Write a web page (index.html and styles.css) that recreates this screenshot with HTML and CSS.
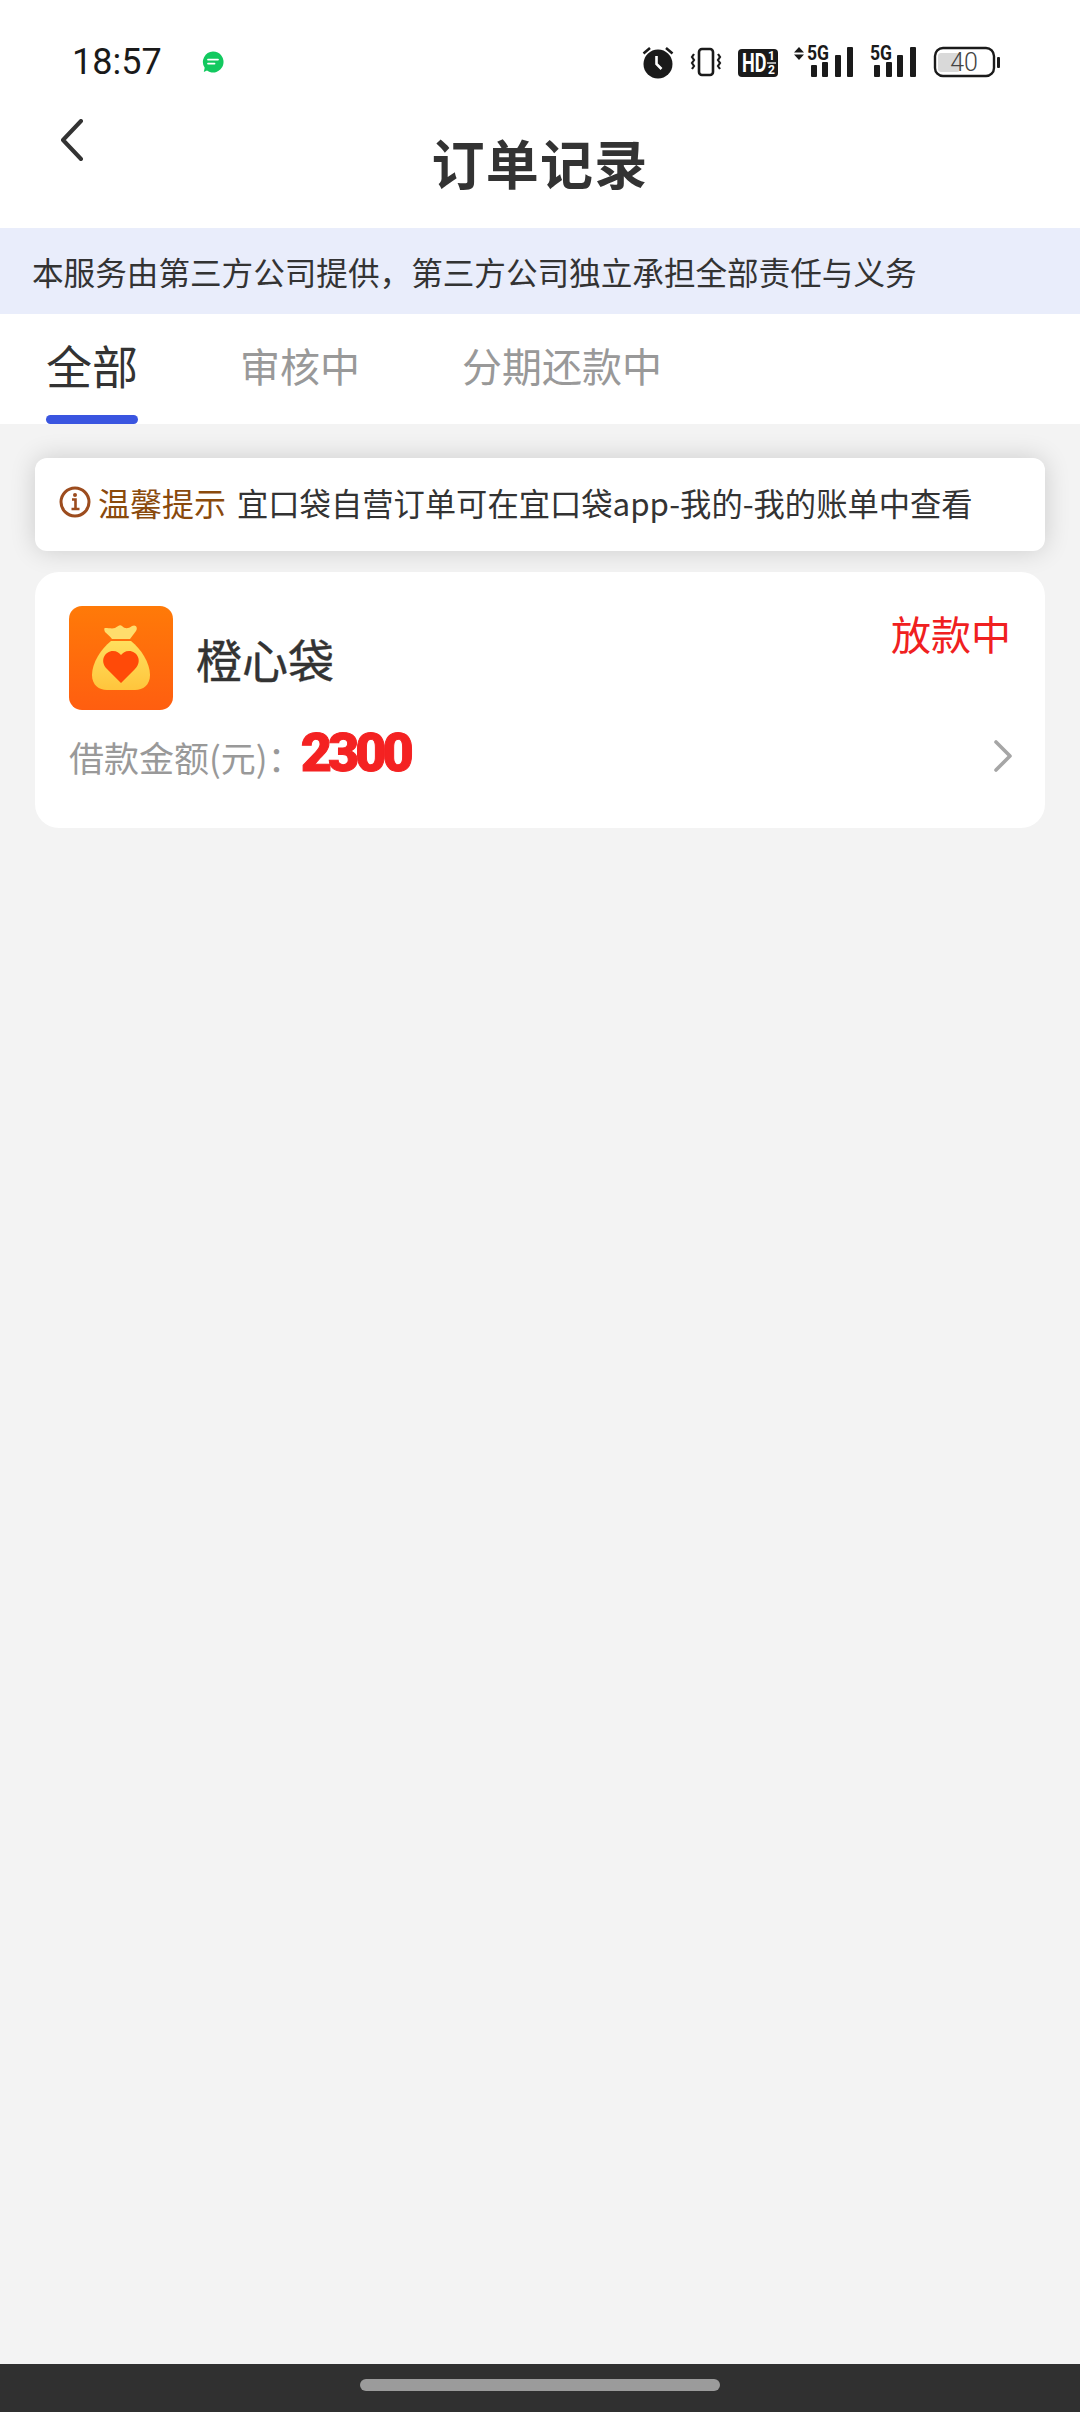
FILE: index.html
```html
<!DOCTYPE html>
<html lang="zh-CN">
<head>
  <meta charset="UTF-8" />
  <meta name="viewport" content="width=device-width, initial-scale=1.0"/>
  <title>订单记录</title>
  <link rel="stylesheet" href="styles.css">
</head>
<body>
  <div class="page">
    <div class="status-bar">
      <span class="time">18:57</span>
      <svg class="msg-dot" viewBox="0 0 24 24" width="24" height="24">
        <path d="M12 1.500a10.500 10.500 0 1 1-6 19.100L2.800 22l.9-4.200A10.500 10.500 0 0 1 12 1.500z" fill="#12c95f"/>
        <path d="M7 9.600h10M7 13.600h6.500" stroke="#fff" stroke-width="1.800" stroke-linecap="round"/>
      </svg>
      <div class="status-icons">
        <svg viewBox="0 0 32 34" width="32" height="34">
          <circle cx="16" cy="19" r="14.500" fill="#1a1a1a"/>
          <path d="M1.500 8.500 8 3M30.500 8.500 24 3" stroke="#1a1a1a" stroke-width="2.600"/>
          <path d="M14.500 11v8l5 5" stroke="#fff" stroke-width="2.600" fill="none"/>
        </svg>
        <svg viewBox="0 0 32 34" width="32" height="34">
          <rect x="9" y="4" width="14" height="26" rx="3" fill="none" stroke="#1a1a1a" stroke-width="2.600"/>
          <path d="M4 9l-2 3 2 3-2 3 2 3-2 3M28 9l2 3-2 3 2 3-2 3 2 3" fill="none" stroke="#1a1a1a" stroke-width="2.200"/>
        </svg>
        <svg viewBox="0 0 40 34" width="40" height="34">
          <rect x="0" y="4" width="40" height="28" rx="4" fill="#1a1a1a"/>
          <text transform="translate(4 27) scale(.72 1)" class="hd-text">HD</text>
          <text x="30" y="15" class="hd-small">1</text>
          <path d="M29 18h9" stroke="#fff" stroke-width="1.300"/>
          <text x="30" y="29" class="hd-small">2</text>
        </svg>
        <svg class="net" viewBox="0 -6 60 46" width="60" height="46">
          <path d="M5 2 10 7.500H0zM5 15 0 9.500H10z" fill="#1a1a1a"/>
          <text x="13" y="15" class="net-text" textLength="22" lengthAdjust="spacingAndGlyphs">5G</text>
          <rect x="17" y="20" width="6" height="12" rx="1" fill="#1a1a1a"/>
          <rect x="28" y="17" width="6" height="15" rx="1" fill="#1a1a1a"/>
          <rect x="41" y="10" width="6" height="22" rx="1" fill="#1a1a1a"/>
          <rect x="53" y="2" width="6" height="30" rx="1" fill="#1a1a1a"/>
        </svg>
        <svg class="net" viewBox="0 -6 47 46" width="47" height="46">
          <text x="0" y="15" class="net-text" textLength="22" lengthAdjust="spacingAndGlyphs">5G</text>
          <rect x="4" y="20" width="6" height="12" rx="1" fill="#1a1a1a"/>
          <rect x="16" y="17" width="6" height="15" rx="1" fill="#1a1a1a"/>
          <rect x="27" y="10" width="6" height="22" rx="1" fill="#1a1a1a"/>
          <rect x="40" y="2" width="6" height="30" rx="1" fill="#1a1a1a"/>
        </svg>
        <svg viewBox="0 0 68 34" width="68" height="34">
          <rect x="2" y="3" width="59" height="28" rx="8" fill="none" stroke="#1a1a1a" stroke-width="2.400"/>
          <rect x="5" y="8" width="22" height="19" rx="3" fill="#d9d9d9"/>
          <rect x="64" y="12" width="3" height="11" rx="1" fill="#1a1a1a"/>
          <text x="31" y="26" class="battery-text" text-anchor="middle">40</text>
        </svg>
      </div>
    </div>

    <div class="nav">
      <svg class="back" viewBox="0 0 24 42" width="24" height="42">
        <path d="M21 2 3 21l18 19" fill="none" stroke="#333" stroke-width="4" stroke-linecap="round" stroke-linejoin="round"/>
      </svg>
      <h1>订单记录</h1>
    </div>

    <div class="notice">本服务由第三方公司提供，第三方公司独立承担全部责任与义务</div>

    <div class="tabs">
      <div class="tab active">全部</div>
      <div class="tab">审核中</div>
      <div class="tab">分期还款中</div>
    </div>

    <div class="content">
      <div class="tip">
        <svg class="tip-icon" viewBox="0 0 32 32" width="32" height="32">
          <circle cx="16" cy="16" r="14" fill="none" stroke="#9c4c1e" stroke-width="3"/>
          <path d="M13 13.500h3.500V23M12.500 23h8" fill="none" stroke="#9c4c1e" stroke-width="2.600"/>
          <circle cx="16" cy="9" r="2" fill="#9c4c1e"/>
        </svg>
        <span class="tip-label">温馨提示</span>
        <span class="tip-text">宜口袋自营订单可在宜口袋app-我的-我的账单中查看</span>
      </div>

      <div class="order">
        <div class="order-top">
          <svg class="logo" viewBox="0 0 104 104" width="104" height="104">
            <defs>
              <linearGradient id="logoBg" x1="0" y1="0" x2="0" y2="1">
                <stop offset="0" stop-color="#ff7a08"/>
                <stop offset="1" stop-color="#ff5e10"/>
              </linearGradient>
              <linearGradient id="bagFill" x1="0" y1="0" x2="0" y2="1">
                <stop offset="0" stop-color="#ffdf5e"/>
                <stop offset="1" stop-color="#ffc53c"/>
              </linearGradient>
            </defs>
            <rect width="104" height="104" rx="13" fill="url(#logoBg)"/>
            <path d="M36 22c4 0 7 1 10 0 3-2 5-4 7-2 3 3 6 3 10 0 4-2 6 2 4 5-2 3-4 5-6 8H43c-2-3-5-5-7-7-1-2-1-4 0-4z" fill="#ffdd6c"/>
            <path d="M42 35h20c10 8 19 22 19 34 0 10-7 15-15 15H38c-8 0-15-5-15-15 0-12 9-26 19-34z" fill="url(#bagFill)"/>
            <path d="M52 77 38 63c-8-8-2-18 6-18 4 0 6 2 8 4 2-2 4-4 8-4 8 0 14 10 6 18z" fill="#ff4a08"/>
          </svg>
          <span class="order-name">橙心袋</span>
          <span class="order-status">放款中</span>
        </div>
        <div class="order-bottom">
          <span class="amount-label">借款金额(元)：</span>
          <span class="amount">2300</span>
          <svg class="arrow" viewBox="0 0 20 32" width="20" height="32">
            <path d="M3 2l14 14L3 30" fill="none" stroke="#a6a6a6" stroke-width="3.600" stroke-linecap="round" stroke-linejoin="round"/>
          </svg>
        </div>
      </div>
    </div>

    <div class="home-bar"><div class="home-pill"></div></div>
  </div>
</body>
</html>
```

FILE: styles.css
```css
* { box-sizing: border-box; }
html, body { margin: 0; padding: 0; }
body { font-family: "Noto Sans CJK SC", "Noto Sans", Roboto, sans-serif; background: #f3f3f3; color: #333; }
.page { width: 1080px; height: 2412px; display: flex; flex-direction: column; overflow: hidden; }

/* status bar */
.status-bar { height: 100px; padding: 24px 79px 0 72px; display: flex; align-items: center; background: #fff; }
.time { font-family: Roboto, sans-serif; font-size: 36px; color: #1a1a1a; width: 129px; }
.status-icons { margin-left: auto; display: flex; align-items: center; gap: 16px; }
.hd-text { font: 700 25px Roboto, sans-serif; fill: #fff; }
.hd-small { font: 700 12px Roboto, sans-serif; fill: #fff; }
.net-text { font: 700 20px Roboto, sans-serif; fill: #1a1a1a; }
.battery-text { font: 300 25px Roboto, sans-serif; fill: #444; }

/* title */
.nav { height: 128px; padding-bottom: 5px; position: relative; display: flex; align-items: center; justify-content: center; background: #fff; }
.back { position: absolute; left: 60px; top: 19px; }
.nav h1 { margin: 0; font-size: 53px; font-weight: 700; letter-spacing: 1.3px; color: #333; }

.notice { height: 86px; padding-left: 32px; display: flex; align-items: center; background: #e9edfb; font-size: 31.600px; color: #333; }

/* tabs */
.tabs { height: 110px; padding-left: 46px; display: flex; gap: 102px; background: #fff; }
.tab { position: relative; font-size: 40px; line-height: 103px; color: #999; }
.tab.active { font-size: 46px; line-height: 100px; color: #333; }
.tab.active::after { content: ""; position: absolute; left: 0; right: 0; bottom: 0; height: 9px; border-radius: 5px; background: #3a55e0; }

.content { flex: 1; padding: 34px 35px 0; display: flex; flex-direction: column; gap: 21px; }

.tip { height: 93px; padding: 0 0 5px 24px; display: flex; align-items: center; background: #fff; border-radius: 12px; box-shadow: 0 0 26px rgba(0, 0, 0, 0.16); }
.tip-icon { margin-right: 7px; }
.tip-label { font-size: 32px; color: #8a4a0c; margin-right: 11px; }
.tip-text { font-size: 31.300px; color: #333; }

.order { height: 256px; padding: 34px 34px 0; background: #fff; border-radius: 24px; }
.order-top { display: flex; align-items: center; position: relative; }
.logo { flex: none; }
.order-name { margin-left: 23px; font-size: 46px; color: #333; -webkit-text-stroke: 0.4px #333; }
.order-status { position: absolute; right: 0; top: -2px; font-size: 40px; color: #f02020; }
.order-bottom { display: flex; align-items: center; height: 64px; margin-top: 14px; }
.amount-label { font-size: 35px; color: #999; }
.amount { margin: 0 0 8px -2px; font-family: Roboto, sans-serif; font-size: 54px; font-weight: 900; letter-spacing: -4px; color: #f42222; -webkit-text-stroke: 1px #f42222; }
.arrow { margin-left: auto; margin-right: -2px; }

.home-bar { height: 48px; flex: none; display: flex; justify-content: center; padding-top: 15px; background: #303030; }
.home-pill { width: 360px; height: 12px; border-radius: 6px; background: #9b9b9b; }
```
